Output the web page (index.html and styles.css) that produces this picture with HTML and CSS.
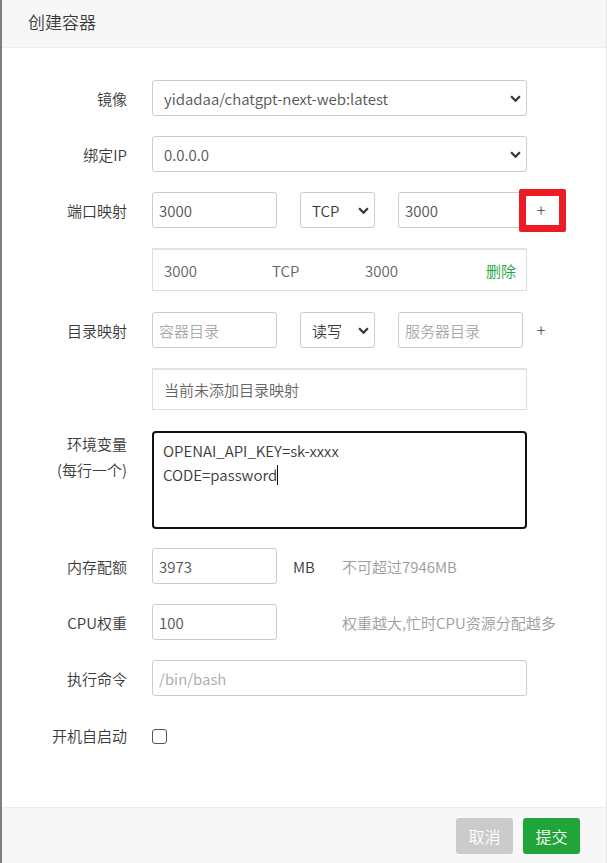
FILE: index.html
```html
<!DOCTYPE html>
<html lang="zh-CN">
<head>
    <meta charset="UTF-8">
    <meta name="viewport" content="width=device-width, initial-scale=1.0">
    <title>创建容器</title>
    <link rel="stylesheet" href="styles.css">
</head>
<body>

<div class="layer">
    <div class="layer-title">创建容器</div>

    <form class="layer-content" action="/container/create" method="POST">
        <!-- Image -->
        <div class="form-row">
            <label class="form-label">镜像</label>
            <div class="select-wrap select-full">
                <select class="form-select" name="image">
                    <option>yidadaa/chatgpt-next-web:latest</option>
                </select>
                <svg class="select-arrow" viewBox="0 0 10 6"><path d="M1 1l4 4 4-4"/></svg>
            </div>
        </div>

        <!-- Bind IP -->
        <div class="form-row">
            <label class="form-label">绑定IP</label>
            <div class="select-wrap select-full">
                <select class="form-select" name="ip">
                    <option>0.0.0.0</option>
                </select>
                <svg class="select-arrow" viewBox="0 0 10 6"><path d="M1 1l4 4 4-4"/></svg>
            </div>
        </div>

        <!-- Ports -->
        <div class="form-row">
            <label class="form-label">端口映射</label>
            <input class="form-input input-short" type="text" name="port_in" value="3000">
            <div class="select-wrap select-short">
                <select class="form-select" name="proto">
                    <option>TCP</option>
                    <option>UDP</option>
                </select>
                <svg class="select-arrow" viewBox="0 0 10 6"><path d="M1 1l4 4 4-4"/></svg>
            </div>
            <input class="form-input input-short" type="text" name="port_out" value="3000">
            <span class="add-btn">+<span class="mark"></span></span>
        </div>
        <div class="form-row list-row">
            <span class="form-label"></span>
            <div class="list-box port-list">
                <span>3000</span>
                <span>TCP</span>
                <span>3000</span>
                <a class="del-link" href="#">删除</a>
            </div>
        </div>

        <!-- Volumes -->
        <div class="form-row">
            <label class="form-label">目录映射</label>
            <input class="form-input input-short" type="text" name="vol_in" placeholder="容器目录">
            <div class="select-wrap select-short">
                <select class="form-select" name="vol_mode">
                    <option>读写</option>
                    <option>只读</option>
                </select>
                <svg class="select-arrow" viewBox="0 0 10 6"><path d="M1 1l4 4 4-4"/></svg>
            </div>
            <input class="form-input input-short" type="text" name="vol_out" placeholder="服务器目录">
            <span class="add-btn">+</span>
        </div>
        <div class="form-row list-row">
            <span class="form-label"></span>
            <div class="list-box empty-list">当前未添加目录映射</div>
        </div>

        <!-- Env -->
        <div class="form-row row-top">
            <label class="form-label label-multi">环境变量<br>(每行一个)</label>
            <div class="form-textarea" role="textbox">OPENAI_API_KEY=sk-xxxx<br>CODE=password<span class="caret"></span></div>
        </div>

        <!-- Memory -->
        <div class="form-row">
            <label class="form-label">内存配额</label>
            <input class="form-input input-short" type="text" name="mem" value="3973">
            <span class="unit">MB</span>
            <span class="hint">不可超过7946MB</span>
        </div>

        <!-- CPU -->
        <div class="form-row">
            <label class="form-label">CPU权重</label>
            <input class="form-input input-short" type="text" name="cpu" value="100">
            <span class="unit"></span>
            <span class="hint">权重越大,忙时CPU资源分配越多</span>
        </div>

        <!-- Command -->
        <div class="form-row">
            <label class="form-label">执行命令</label>
            <input class="form-input input-full" type="text" name="command" placeholder="/bin/bash">
        </div>

        <!-- Autostart -->
        <div class="form-row">
            <label class="form-label label-check">开机自启动</label>
            <span class="checkbox"></span>
        </div>
    </form>

    <div class="layer-btns">
        <button type="button" class="btn btn-cancel">取消</button>
        <button type="button" class="btn btn-submit">提交</button>
    </div>
</div>

</body>
</html>
```

FILE: styles.css
```css
/* Colors */
:root {
    --text: #3a3a3a;
    --input-text: #555555;
    --muted: #9c9c9c;
    --border: #cccccc;
    --panel-bg: #f7f7f7;
    --green: #20a53a;
    --mark-red: #ec1c24;
}

* {
    box-sizing: border-box;
}

body {
    margin: 0;
    font-family: "Noto Sans CJK SC", "Noto Sans", sans-serif;
    font-size: 15px;
    font-weight: 350;
    color: var(--text);
    background-color: #ffffff;
}

.layer {
    display: flex;
    flex-direction: column;
    height: 863px;
    border-left: 2px solid #7f7f7f;
    border-right: 1px solid #e4e4e4;
}

.layer-title {
    height: 48px;
    padding-left: 26px;
    line-height: 44px;
    font-size: 17px;
    background-color: var(--panel-bg);
    border-bottom: 1px solid #ececec;
}

.layer-content {
    flex: 1;
    margin: 0;
    padding-top: 32px;
}

/* Rows */
.form-row {
    display: flex;
    align-items: center;
    min-height: 36px;
    margin-bottom: 20px;
}

.list-row {
    margin-bottom: 21px;
}

.row-top {
    align-items: flex-start;
    margin-bottom: 19px;
}

.form-label {
    flex: none;
    width: 150px;
    padding-right: 25px;
    text-align: right;
}

.label-multi {
    line-height: 26px;
}

.label-check {
    margin-top: 3px;
}

/* Inputs */
.form-input {
    height: 36px;
    padding: 0 6px;
    font-family: inherit;
    font-size: 15px;
    font-weight: 350;
    color: var(--input-text);
    border: 1px solid var(--border);
    border-radius: 3px;
    outline: none;
}

.form-input::placeholder {
    color: #a9a9a9;
}

.input-short {
    width: 125px;
}

.input-full {
    width: 375px;
}

.select-wrap {
    position: relative;
    height: 36px;
}

.select-full {
    width: 375px;
}

.select-short {
    width: 75px;
    margin: 0 23px;
}

.form-select {
    width: 100%;
    height: 36px;
    padding: 0 0 0 11px;
    font-family: inherit;
    font-size: 15px;
    font-weight: 350;
    color: var(--input-text);
    background-color: #ffffff;
    border: 1px solid var(--border);
    border-radius: 3px;
    appearance: none;
    -webkit-appearance: none;
    outline: none;
}

.select-short .form-select {
    color: var(--text);
}

.select-arrow {
    position: absolute;
    right: 6px;
    top: 15px;
    width: 11px;
    height: 7px;
    fill: none;
    stroke: #333333;
    stroke-width: 2;
    pointer-events: none;
}

.add-btn {
    position: relative;
    width: 36px;
    text-align: center;
    font-size: 17px;
    font-weight: 300;
    line-height: 36px;
    color: var(--text);
}

/* red highlight around the add button */
.mark {
    position: absolute;
    left: -4px;
    right: -7px;
    top: -3px;
    bottom: -4px;
    border: 7px solid var(--mark-red);
    border-radius: 2px;
}

/* Lists */
.list-box {
    width: 375px;
    color: #666666;
    border: 1px solid #dddddd;
    border-top: 2px solid #e2e2e2;
}

.port-list {
    display: grid;
    grid-template-columns: 108px 93px 1fr auto;
    align-items: center;
    height: 43px;
    padding: 0 10px 0 11px;
}

.del-link {
    color: var(--green);
    text-decoration: none;
}

.empty-list {
    height: 42px;
    line-height: 40px;
    padding-left: 11px;
}

.form-textarea {
    width: 375px;
    height: 98px;
    padding: 6px 9px;
    line-height: 24px;
    color: var(--text);
    border: 2px solid #111111;
    border-radius: 4px;
}

.caret {
    display: inline-block;
    width: 1px;
    height: 20px;
    vertical-align: -4px;
    background-color: #111111;
}

.unit {
    width: 65px;
    padding-left: 16px;
    color: var(--text);
}

.hint {
    color: var(--muted);
}

.checkbox {
    width: 15px;
    height: 15px;
    margin-top: 4px;
    border: 1.5px solid #555555;
    border-radius: 3px;
    background-color: #ffffff;
}

/* Footer */
.layer-btns {
    display: flex;
    justify-content: flex-end;
    gap: 10px;
    height: 56px;
    padding: 10px 26px 0 0;
    background-color: var(--panel-bg);
    border-top: 1px solid #ececec;
}

.btn {
    width: 57px;
    height: 36px;
    font-family: inherit;
    font-size: 16px;
    font-weight: 350;
    color: #ffffff;
    border: none;
    border-radius: 3px;
    cursor: pointer;
}

.btn-cancel {
    background-color: #cbcbcb;
}

.btn-submit {
    background-color: var(--green);
}
```
